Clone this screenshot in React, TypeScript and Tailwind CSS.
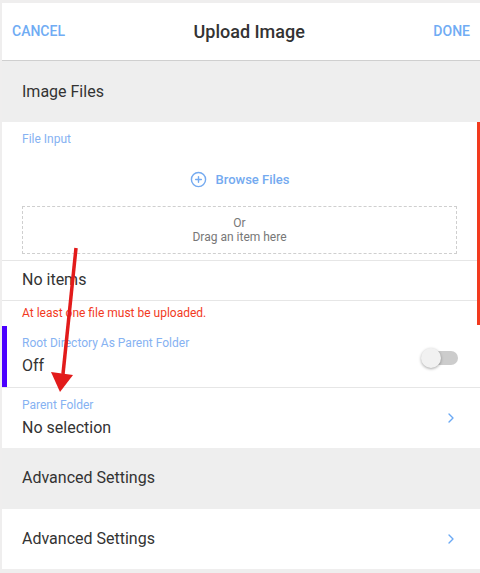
import { ChevronRight, CirclePlus } from "lucide-react";

const label = "text-[12px] leading-[14px] text-[#86b2f2]";
const value = "text-[16px] leading-[20px] text-[#333]";

export default function App() {
  return (
    <div
      className="relative h-[573px] w-[480px] overflow-hidden bg-[#efeeee] pl-[2px] pt-[3px]"
      style={{ fontFamily: "Roboto, 'Liberation Sans', sans-serif" }}
    >
      {/* header */}
      <div className="flex h-[58px] items-center justify-between border-b border-[#cfcfcf] bg-white px-[10px]">
        <button className="text-[14px] font-medium text-[#70acf4]">CANCEL</button>
        <div className="text-[18px] font-medium text-[#333]">Upload Image</div>
        <button className="text-[14px] font-medium text-[#70acf4]">DONE</button>
      </div>

      {/* section: image files */}
      <div className="flex h-[61px] items-center bg-[#eeeeee] px-[20px] text-[16px] text-[#333]">
        Image Files
      </div>

      <div className="relative bg-white">
        <div className="absolute right-0 top-0 h-[203px] w-[3px] bg-[#f23a1e]" />
        <div className="border-b border-[#e6e6e6] pb-[6px] pl-[20px] pr-[23px] pt-[10px]">
          <div className={label}>File Input</div>
          <button className="mx-auto mt-[24px] flex items-center gap-[9px] text-[13px] font-medium text-[#74aaf0]">
            <CirclePlus size={17} strokeWidth={2} />
            Browse Files
          </button>
          <div className="mt-[16px] flex h-[48px] flex-col items-center justify-center border border-dashed border-[#cfcfcf] text-[12px] leading-[14px] text-[#777]">
            <span>Or</span>
            <span>Drag an item here</span>
          </div>
        </div>
        <div className={`flex h-[40px] items-center border-b border-[#e6e6e6] px-[20px] ${value}`}>
          No items
        </div>
        <div className="flex h-[25px] items-center px-[20px] text-[12px] text-[#f23a1e]">
          At least one file must be uploaded.
        </div>
      </div>

      {/* toggle row */}
      <div className="relative flex h-[62px] items-center justify-between border-b border-[#e6e6e6] bg-white px-[20px]">
        <div className="absolute bottom-0 left-0 top-0 w-[5px] bg-[#4a00ff]" />
        <div>
          <div className={label}>Root Directory As Parent Folder</div>
          <div className={`mt-[6px] ${value}`}>Off</div>
        </div>
        <div className="relative mr-[2px] mt-[4px] h-[14px] w-[34px] rounded-full bg-[#cccccc]">
          <div className="absolute left-[-3px] top-[-3px] h-[20px] w-[20px] rounded-full bg-[#f1f1f1] shadow-[0_1px_3px_rgba(0,0,0,0.35)]" />
        </div>
      </div>

      {/* parent folder */}
      <div className="flex h-[60px] items-center justify-between bg-white px-[20px]">
        <div>
          <div className={label}>Parent Folder</div>
          <div className={`mt-[6px] ${value}`}>No selection</div>
        </div>
        <ChevronRight size={16} strokeWidth={2} className="mr-[1px] text-[#6aa9f4]" />
      </div>

      <div className="flex h-[61px] items-center bg-[#eeeeee] px-[20px] text-[16px] text-[#333]">
        Advanced Settings
      </div>

      <div className="flex h-[60px] items-center justify-between bg-white px-[20px]">
        <div className={value}>Advanced Settings</div>
        <ChevronRight size={16} strokeWidth={2} className="mr-[1px] text-[#6aa9f4]" />
      </div>

      {/* red annotation arrow */}
      <svg className="pointer-events-none absolute left-0 top-0" width="480" height="573">
        <line x1="76" y1="248" x2="63" y2="374" stroke="#e21b1b" strokeWidth="3.5" />
        <polygon points="51,372 73,375 60,392" fill="#e21b1b" />
      </svg>
    </div>
  );
}
